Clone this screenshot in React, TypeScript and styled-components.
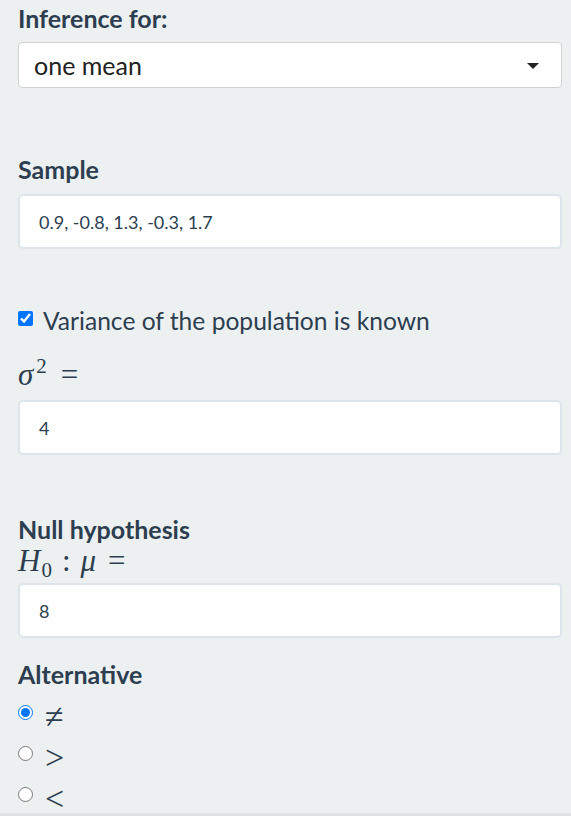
import React from "react";
import styled, { createGlobalStyle } from "styled-components";

const Global = createGlobalStyle`
  html, body { margin: 0; padding: 0; background: #ecf0f1; }
  body { font-family: Lato, "Open Sans", sans-serif; color: #2c3e50; }
  * { box-sizing: border-box; }
`;

const Panel = styled.div`
  background: #ecf0f1;
  padding: 0 9px 0 18px;
  height: 816px;
  overflow: hidden;
  border-bottom: 3px solid #dfe2e3;
`;

const Group = styled.div<{ $mt?: number }>`
  margin-top: ${(p) => p.$mt ?? 0}px;
`;

const Label = styled.div`
  font-weight: 700;
  font-size: 25px;
  line-height: 30px;
`;

const SelectBox = styled.div`
  position: relative;
  height: 46px;
  margin-top: 9px;
  background: #fff;
  border: 1px solid #cfd3d5;
  border-radius: 4px;
  display: flex;
  align-items: center;
  padding-left: 15px;
  font-size: 25px;
  color: #222;
`;

const Caret = styled.div`
  position: absolute;
  right: 22px;
  top: 20px;
  width: 0;
  height: 0;
  border-left: 6px solid transparent;
  border-right: 6px solid transparent;
  border-top: 6px solid #222;
`;

const TextBox = styled.div<{ $mt?: number }>`
  height: 55px;
  margin-top: ${(p) => p.$mt ?? 12}px;
  background: #fff;
  border: 2px solid #dce4ec;
  border-radius: 5px;
  display: flex;
  align-items: center;
  padding-left: 19px;
  font-size: 18px;
  color: #2c3e50;
`;

const CheckRow = styled.label`
  display: flex;
  align-items: center;
  gap: 10px;
  font-size: 24.6px;
  line-height: 30px;
`;

const Check = styled.input`
  width: 15px;
  height: 15px;
  margin: 0;
  position: relative;
  top: -3px;
`;

const Math = styled.div<{ $mt?: number }>`
  font-family: "Liberation Serif", "DejaVu Serif", serif;
  font-size: 31px;
  line-height: 34px;
  margin-top: ${(p) => p.$mt ?? 0}px;
  white-space: nowrap;
`;

const Var = styled.span<{ $ml?: number }>`
  font-style: italic;
  margin-left: ${(p) => p.$ml ?? 0}px;
`;

const Sup = styled.span`
  font-size: 21px;
  margin-left: 3px;
  position: relative;
  top: -12px;
`;

const Sub = styled.span`
  font-size: 21px;
  margin-left: 1px;
  position: relative;
  top: 6px;
`;

const Op = styled.span<{ $ml?: number }>`
  margin-left: ${(p) => p.$ml ?? 10}px;
`;

const RadioList = styled.div`
  display: flex;
  flex-direction: column;
  gap: 9px;
  margin-top: 12px;
`;

const RadioRow = styled.label`
  display: flex;
  align-items: center;
  gap: 12px;
  font-family: "Liberation Serif", "DejaVu Serif", serif;
  font-size: 34px;
  line-height: 32px;
`;

const Radio = styled.input`
  width: 15px;
  height: 15px;
  margin: 0;
  position: relative;
  top: -5px;
`;

export default function App() {
  return (
    <>
      <Global />
      <Panel>
        <Group $mt={3}>
          <Label>Inference for:</Label>
          <SelectBox>
            one mean
            <Caret />
          </SelectBox>
        </Group>
        <Group $mt={66}>
          <Label>Sample</Label>
          <TextBox $mt={10}>0.9, -0.8, 1.3, -0.3, 1.7</TextBox>
        </Group>
        <Group $mt={57}>
          <CheckRow>
            <Check type="checkbox" defaultChecked />
            Variance of the population is known
          </CheckRow>
          <Math $mt={22}>
            <Var>σ</Var>
            <Sup>2</Sup>
            <Op $ml={14}>=</Op>
          </Math>
          <TextBox $mt={5}>4</TextBox>
        </Group>
        <Group $mt={59}>
          <Label>Null hypothesis</Label>
          <Math>
            <Var>H</Var>
            <Sub>0</Sub>
            <Op $ml={10}>:</Op>
            <Var $ml={10}>μ</Var>
            <Op $ml={12}>=</Op>
          </Math>
          <TextBox $mt={2}>8</TextBox>
        </Group>
        <Group $mt={21}>
          <Label>Alternative</Label>
          <RadioList>
            <RadioRow>
              <Radio type="radio" name="alt" defaultChecked />≠
            </RadioRow>
            <RadioRow>
              <Radio type="radio" name="alt" />&gt;
            </RadioRow>
            <RadioRow>
              <Radio type="radio" name="alt" />&lt;
            </RadioRow>
          </RadioList>
        </Group>
      </Panel>
    </>
  );
}
